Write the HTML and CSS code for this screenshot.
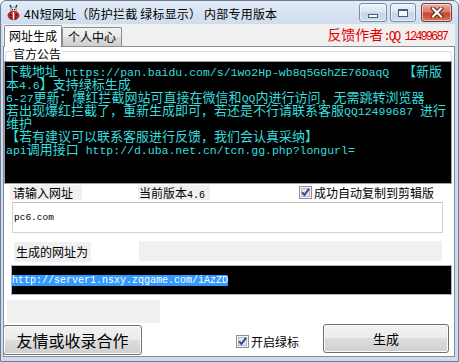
FILE: index.html
```html
<!DOCTYPE html>
<html lang="zh-CN">
<head>
<meta charset="utf-8">
<title>4N短网址</title>
<link rel="stylesheet" href="styles.css">
</head>
<body>
<div class="win">
  <div class="titlebar">
    <svg class="appicon" width="15" height="16" viewBox="0 0 15 16">
      <path d="M4 1 L6 5 M11 1 L9 5" stroke="#222" stroke-width="1.3" fill="none"/>
      <circle cx="7.5" cy="6" r="3" fill="#f2f2f2" stroke="#888" stroke-width="0.8"/>
      <circle cx="6.3" cy="5.6" r="0.8" fill="#222"/>
      <circle cx="8.7" cy="5.6" r="0.8" fill="#222"/>
      <ellipse cx="7.5" cy="11.5" rx="5.5" ry="4.2" fill="#d9251d" stroke="#7a1510" stroke-width="0.8"/>
      <path d="M7.5 8 L7.5 15.5" stroke="#fff" stroke-width="1.4"/>
      <circle cx="4.6" cy="11" r="1" fill="#222"/>
      <circle cx="10.4" cy="11" r="1" fill="#222"/>
      <circle cx="5.4" cy="13.6" r="0.8" fill="#222"/>
      <circle cx="9.6" cy="13.6" r="0.8" fill="#222"/>
    </svg>
    <span class="title">4N短网址（防护拦截 绿标显示） 内部专用版本</span>
    <div class="caps">
      <div class="cap cap-min"><span class="minbar"></span></div>
      <div class="cap cap-max"><span class="maxbox"></span></div>
      <div class="cap cap-close">
        <svg width="14" height="11" viewBox="0 0 14 11">
          <path d="M3 1.5 L11 9.5 M11 1.5 L3 9.5" stroke="#5a1e16" stroke-width="4" stroke-linecap="square" fill="none"/>
          <path d="M3 1.5 L11 9.5 M11 1.5 L3 9.5" stroke="#ffffff" stroke-width="2.2" stroke-linecap="square" fill="none"/>
        </svg>
      </div>
    </div>
  </div>
  <div class="client">
    <div class="tabstrip">
      <div class="tab tab-sel">网址生成</div>
      <div class="tab">个人中心</div>
      <div class="feedback">反馈作者<span class="fb-l">:QQ 12499687</span></div>
    </div>
    <div class="page">
      <div class="ghead"><span class="glabel">官方公告</span></div>
      <div class="notice">
        <div class="ln">下载地址<span class="l"> https://pan.baidu.com/s/1wo2Hp-wb8q5GGhZE76DaqQ  </span>【新版</div>
        <div class="ln">本<span class="l">4.6</span>】支持绿标生成</div>
        <div class="ln"><span class="l">6-27</span>更新：爆红拦截网站可直接在微信和<span class="l">QQ</span>内进行访问，无需跳转浏览器</div>
        <div class="ln">若出现爆红拦截了，重新生成即可，若还是不行请联系客服<span class="l">QQ12499687 </span>进行</div>
        <div class="ln">维护</div>
        <div class="ln">【若有建议可以联系客服进行反馈，我们会认真采纳】</div>
        <div class="ln"><span class="l">api</span>调用接口<span class="l"> http://d.uba.net.cn/tcn.gg.php?longurl=</span></div>
      </div>
      <div class="row1">
        <div class="lab lab-in">请输入网址</div>
        <div class="lab lab-ver">当前版本<span class="ml">4.6</span></div>
        <div class="chk chk-copy">
          <svg class="box" width="13" height="13" viewBox="0 0 13 13">
            <rect x="0.5" y="0.5" width="12" height="12" fill="#f6f6f6" stroke="#8e8f8f"/>
            <rect x="2.5" y="2.5" width="8" height="8" fill="#e4e6ea" stroke="#b6bcc6"/>
            <path d="M3.2 6.4 L5.4 9 L10 2.8" stroke="#2c4a94" stroke-width="2" fill="none"/>
          </svg>
          <span>成功自动复制到剪辑版</span>
        </div>
      </div>
      <div class="input">pc6.com</div>
      <div class="row2">
        <div class="lab lab-out">生成的网址为</div>
        <div class="graybox"></div>
      </div>
      <div class="result"><span class="selected">http://server1.nsxy.zqgame.com/iAzZD</span></div>
      <div class="grayrect"></div>
      <div class="bottom">
        <div class="btn btn-coop">友情或收录合作</div>
        <div class="chk chk-green">
          <svg class="box" width="13" height="13" viewBox="0 0 13 13">
            <rect x="0.5" y="0.5" width="12" height="12" fill="#f6f6f6" stroke="#8e8f8f"/>
            <rect x="2.5" y="2.5" width="8" height="8" fill="#e4e6ea" stroke="#b6bcc6"/>
            <path d="M3.2 6.4 L5.4 9 L10 2.8" stroke="#2c4a94" stroke-width="2" fill="none"/>
          </svg>
          <span>开启绿标</span>
        </div>
        <div class="btn btn-gen">生成</div>
      </div>
    </div>
  </div>
</div>
</body>
</html>
```
FILE: styles.css
```css
* { box-sizing: border-box; margin: 0; padding: 0; }
html, body { width: 459px; height: 362px; overflow: hidden; }
body {
  font-family: "Noto Sans CJK SC", "Microsoft YaHei", sans-serif;
  font-size: 12px;
  color: #000;
  background: #fff;
}

.win {
  width: 459px;
  height: 362px;
  border: 1px solid #6b7c93;
  border-radius: 6px 6px 0 0;
  background: linear-gradient(#e2ebf6, #cddcee 24px, #cddcee);
  padding: 0 3px 4px 2px;
  display: flex;
  flex-direction: column;
}

/* title bar */
.titlebar {
  height: 23px;
  flex: none;
  display: flex;
  align-items: flex-start;
}
.appicon { margin: 3px 0 0 3px; flex: none; }
.title {
  margin: 5px 0 0 3px;
  line-height: 16px;
  font-size: 12px;
  letter-spacing: 0.2px;
  white-space: nowrap;
}
.caps {
  margin: 2px 3px 0 auto;
  display: flex;
  flex: none;
}
.cap {
  height: 19px;
  border: 1px solid #7b8ba3;
  border-radius: 3px;
  display: flex;
  align-items: center;
  justify-content: center;
  box-shadow: inset 0 0 0 1px rgba(255,255,255,0.55);
}
.cap-min, .cap-max {
  background: linear-gradient(#eef3fa, #dae5f2 45%, #c4d5ea 55%, #cfdcef);
}
.cap-min { width: 28px; }
.cap-max { width: 26px; margin-left: 3px; }
.cap-close {
  width: 31px;
  margin-left: 5px;
  border-color: #7a3a31;
  background: linear-gradient(#eab0a4, #d97b6b 45%, #c4452f 55%, #d5785f);
}
.minbar {
  width: 10px;
  height: 4px;
  margin-top: 7px;
  background: #fff;
  border: 1px solid #4d5d74;
}
.maxbox {
  width: 10px;
  height: 8px;
  border: 1px solid #4d5d74;
  border-top-width: 2px;
  background: #f2f5f9;
}

/* client */
.client {
  flex: 1;
  background: #f0f0f0;
  display: flex;
  flex-direction: column;
}
.tabstrip {
  height: 22px;
  flex: none;
  display: flex;
  align-items: flex-end;
  padding-left: 1px;
}
.tab {
  width: 60px;
  height: 19px;
  border: 1px solid #898c95;
  border-bottom: none;
  border-radius: 2px 2px 0 0;
  background: linear-gradient(#f2f2f2, #ebebeb 50%, #dddddd 50%, #cfcfcf);
  text-align: center;
  line-height: 18px;
  font-size: 12px;
}
.tab-sel {
  position: relative;
  z-index: 1;
  width: 58px;
  height: 22px;
  margin-bottom: -1px;
  background: #fff;
  line-height: 20px;
}
.feedback {
  align-self: flex-start;
  margin: 2px 8px 0 auto;
  line-height: 16px;
  font-size: 14px;
  color: #e30000;
  white-space: nowrap;
}
.fb-l {
  font-family: "Liberation Mono", monospace;
  font-size: 12px;
  letter-spacing: -1.9px;
}

/* tab page */
.page {
  flex: 1;
  background: #fff;
  border: 1px solid #898c95;
  overflow: hidden;
  display: flex;
  flex-direction: column;
}
.ghead {
  height: 14px;
  flex: none;
  margin: 0 2px 0 1px;
  display: flex;
}
.ghead::before, .ghead::after {
  content: "";
  margin-top: 4px;
  height: 10px;
  border-top: 1px solid #d5dfe5;
}
.ghead::before {
  width: 6px;
  border-left: 1px solid #d5dfe5;
  border-top-left-radius: 3px;
}
.ghead::after {
  flex: 1;
  border-right: 1px solid #d5dfe5;
  border-top-right-radius: 3px;
}
.glabel {
  padding: 0 1px;
  line-height: 14px;
  font-size: 12px;
}

.notice {
  flex: none;
  height: 123px;
  margin-right: 2px;
  background: #000;
  border: 1px solid #a0a0a0;
  padding: 2px 0 0 1px;
  color: #34dede;
  font-size: 13px;
  overflow: hidden;
}
.ln {
  height: 13px;
  line-height: 13px;
  white-space: pre;
}
.l {
  font-family: "Liberation Mono", monospace;
  font-size: 11.5px;
}

.row1 {
  height: 16px;
  flex: none;
  display: flex;
  align-items: center;
}
.lab {
  background: #f0f0f0;
  height: 15px;
  line-height: 15px;
  font-size: 12px;
  white-space: nowrap;
}
.lab-in { margin-left: 6px; width: 72px; padding-left: 3px; }
.lab-ver { margin-left: 56px; width: 72px; padding-left: 1px; }
.ml { font-family: "Liberation Mono", monospace; font-size: 10px; }
.chk {
  display: flex;
  align-items: center;
  gap: 2px;
  font-size: 12px;
  white-space: nowrap;
}
.box { flex: none; }
.chk-copy { margin-left: 89px; }

.input {
  flex: none;
  height: 31px;
  margin: 2px 11px 0 8px;
  border: 1px solid #d3d3d3;
  border-top-color: #bdbdbd;
  padding-left: 1px;
  display: flex;
  align-items: center;
  font-family: "Liberation Mono", monospace;
  font-size: 9.5px;
}

.row2 {
  flex: none;
  height: 21px;
  margin-top: 8px;
  display: flex;
}
.lab-out {
  margin: 1px 0 0 10px;
  width: 77px;
  height: 20px;
  line-height: 20px;
  padding-left: 2px;
}
.graybox {
  margin-left: 48px;
  width: 303px;
  height: 20px;
  background: #f0f0f0;
}

.result {
  flex: none;
  height: 30px;
  margin: 3px 2px 0 7px;
  background: #000;
  border: 1px solid #9fb4cc;
  display: flex;
  align-items: center;
}
.selected {
  background: #3399ff;
  color: #fff;
  font-family: "Liberation Mono", monospace;
  font-size: 10px;
  line-height: 11px;
  white-space: nowrap;
}

.grayrect {
  flex: none;
  width: 153px;
  height: 23px;
  margin: 5px 0 0 3px;
  background: #f0f0f0;
}

.bottom {
  flex: none;
  margin-top: 1px;
  display: flex;
  align-items: flex-start;
}
.btn {
  border: 1px solid #707070;
  border-radius: 3px;
  background: linear-gradient(#f2f2f2, #ebebeb 50%, #dddddd 50%, #cfcfcf);
  box-shadow: inset 0 0 0 1px #fbfbfb;
  display: flex;
  align-items: center;
  justify-content: center;
  white-space: nowrap;
}
.btn-coop {
  margin: 1px 0 0 -1px;
  width: 139px;
  height: 30px;
  font-size: 16px;
}
.chk-green { margin: 9px 0 0 94px; }
.btn-gen {
  margin-left: 24px;
  width: 126px;
  height: 29px;
  font-size: 13px;
}
```
